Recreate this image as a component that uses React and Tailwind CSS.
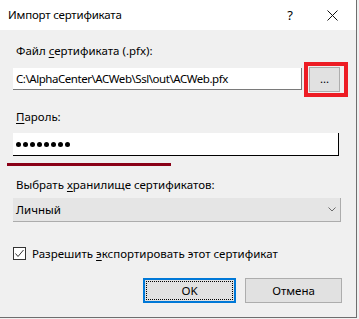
import React from "react"

const font = "font-['Noto_Sans','Open_Sans',sans-serif]"

const CloseIcon = () => (
  <svg width="11" height="11" viewBox="0 0 11 11" fill="none" stroke="#111" strokeWidth="1">
    <path d="M0.5 0.5 10.5 10.5M10.5 0.5 0.5 10.5" />
  </svg>
)

const Chevron = () => (
  <svg width="8" height="5" viewBox="0 0 8 5" fill="none" stroke="#6b6b6b" strokeWidth="1">
    <path d="M0.5 0.5 4 4 7.5 0.5" />
  </svg>
)

const CheckMark = () => (
  <svg width="11" height="11" viewBox="0 0 11 11" fill="none" stroke="#333" strokeWidth="1">
    <path d="M1.5 5.5 4 8.5 9.5 2" />
  </svg>
)

export default function App() {
  return (
    <div className={`w-[359px] h-[319px] bg-[#f0f0f0] text-[11.5px] leading-[16px] text-black ${font}`}>
      <div className="relative w-[357px] h-[318px] bg-[#f0f0f0] border-r border-b border-[#6e6e6e] flex flex-col">
        {/* title bar */}
        <div className="h-[30px] bg-white flex items-center pl-[8px] shrink-0">
          <span className="tracking-[-0.2px]">Импорт сертификата</span>
          <span className="ml-auto mr-[34px] text-[13px]">?</span>
          <span className="mr-[18px] flex items-center"><CloseIcon /></span>
        </div>

        <div className="flex flex-col pl-[13px]">
          <div className="mt-[13px] pl-[3px] h-[16px]">
            Файл <u className="underline-offset-2">с</u>ертификата (.pfx):
          </div>

          <div className="mt-[8px] flex items-start h-[25px]">
            <div className="mt-[1px] w-[289px] h-[22px] bg-white border-r border-b border-[#7a7a7a] pl-[3px] flex items-center tracking-[-0.45px]">
              C:\AlphaCenter\ACWeb\Ssl\out\ACWeb.pfx
            </div>
            <div className="relative ml-[7px] w-[31px] h-[25px] bg-[#e1e1e1] border border-[#adadad] flex items-center justify-center pb-[2px]">
              ...
              <div className="absolute left-[-6px] top-[-6px] w-[44px] h-[35px] border-[4px] border-[#ed1c24]" />
            </div>
          </div>

          <div className="mt-[17px] pl-[3px] h-[16px]">
            <u className="underline-offset-2">П</u>ароль:
          </div>

          <div className="mt-[8px] w-[326px] h-[23px] bg-white border-r border-b border-black pl-[3px] flex items-center gap-[2px]">
            {[0, 1, 2, 3, 4, 5, 6, 7].map((i) => (
              <div key={i} className="w-[5px] h-[5px] rounded-full bg-black" />
            ))}
          </div>

          <div className="mt-[21px] pl-[3px] h-[16px]">
            Выбрать <u className="underline-offset-2">х</u>ранилище сертификатов:
          </div>

          <div className="mt-[5px] w-[328px] h-[24px] bg-[#e5e5e5] border-r border-b border-[#acacac] pl-[3px] pr-[4px] flex items-center">
            <span>Личный</span>
            <span className="ml-auto"><Chevron /></span>
          </div>

          <div className="mt-[25px] flex items-center h-[13px]">
            <div className="w-[13px] h-[13px] border border-[#333] bg-white flex items-center justify-center">
              <CheckMark />
            </div>
            <span className="ml-[6px]">
              Разрешить <u className="underline-offset-2">э</u>кспортировать этот сертификат
            </span>
          </div>

          <div className="mt-[18px] flex h-[25px] pl-[130px]">
            <div className="relative w-[93px] h-[25px] bg-[#e1e1e1] border-2 border-[#0078d7] flex items-center justify-center">
              <div className="absolute inset-[1px] border border-dotted border-black" />
              OK
            </div>
            <div className="ml-[9px] w-[97px] h-[25px] bg-[#e1e1e1] border border-[#adadad] flex items-center justify-center">
              Отмена
            </div>
          </div>
        </div>

        {/* annotation line */}
        <div className="absolute left-[7px] top-[163px] w-[164px] h-[3px] bg-[#8a0017]" />
      </div>
    </div>
  )
}
